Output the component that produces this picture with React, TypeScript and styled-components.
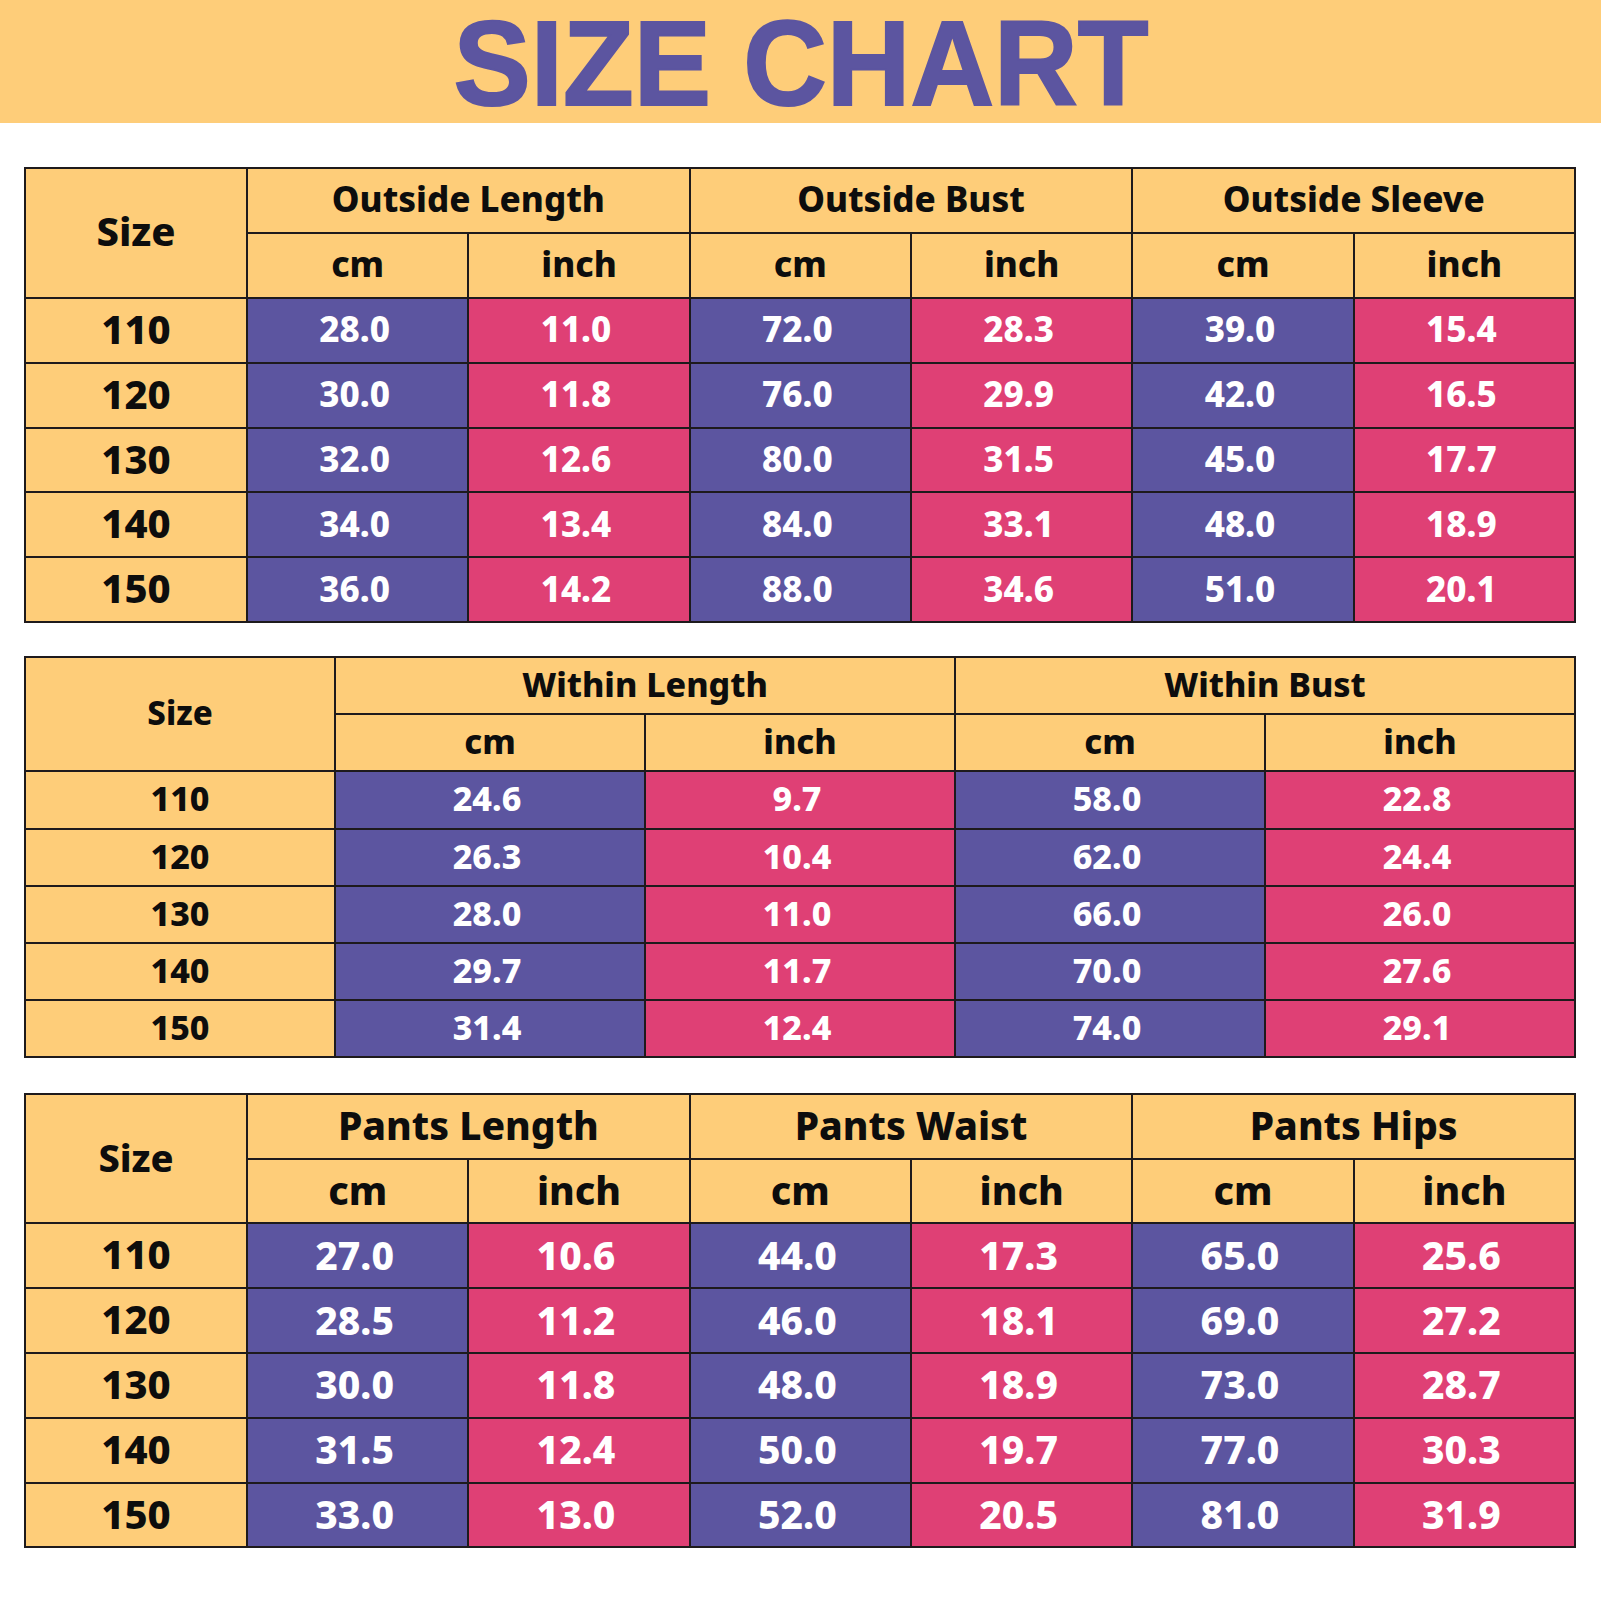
import React from "react";
import styled, { createGlobalStyle } from "styled-components";

const Global = createGlobalStyle`
  html, body { margin: 0; padding: 0; background: #ffffff; }
  body { font-family: "Noto Sans", "DejaVu Sans", sans-serif; }
`;

const YELLOW = "#fecd79";
const PURPLE = "#5c55a0";
const PINK = "#df4075";
const LINE = "#1e1a1c";

const Page = styled.div`
  width: 1601px;
  height: 1601px;
  display: flex;
  flex-direction: column;
`;

const Banner = styled.header`
  height: 123px;
  background: ${YELLOW};
  display: flex;
  align-items: center;
  justify-content: center;
`;

const Title = styled.h1`
  margin: 0;
  display: inline-block;
  font-family: "Liberation Sans", Arial, sans-serif;
  font-weight: 700;
  font-size: 120px;
  line-height: 120px;
  color: ${PURPLE};
  -webkit-text-stroke: 2px ${PURPLE};
  transform: scaleX(0.965);
  transform-origin: center;
  white-space: nowrap;
  padding-top: 2px;
`;

const Tables = styled.main`
  display: flex;
  flex-direction: column;
  padding: 44px 0 0 24px;
`;

const Table = styled.table<{ $gap: number }>`
  width: 1550px;
  border-collapse: collapse;
  table-layout: fixed;
  border: 2px solid ${LINE};
  margin-top: ${(p) => p.$gap}px;
`;

const Row = styled.tr<{ $h: number }>`
  height: ${(p) => p.$h}px;
`;

const HeadCell = styled.th<{ $size: number }>`
  background: ${YELLOW};
  color: #0d0d0d;
  border: 2px solid ${LINE};
  font-family: "Noto Sans", sans-serif;
  font-weight: 800;
  font-size: ${(p) => p.$size}px;
  line-height: 1;
  text-align: center;
  vertical-align: middle;
  padding: 0 0 3px 0;
`;

const ValueCell = styled.td<{ $kind: "cm" | "inch"; $size: number }>`
  background: ${(p) => (p.$kind === "cm" ? PURPLE : PINK)};
  color: #ffffff;
  border: 2px solid ${LINE};
  font-family: "Noto Sans", sans-serif;
  font-weight: 800;
  font-size: ${(p) => p.$size}px;
  line-height: 1;
  text-align: center;
  vertical-align: middle;
  padding: 0 6px 3px 0;
`;

type Spec = {
  groups: string[];
  rows: [string, string[]][];
  rowH: number;
  gap: number;
  sizeCol: number;
  headSize: number;
  unitSize: number;
  labelSize: number;
  sizeLabel: number;
  valueSize: number;
};

const specs: Spec[] = [
  {
    groups: ["Outside Length", "Outside Bust", "Outside Sleeve"],
    rows: [
      ["110", ["28.0", "11.0", "72.0", "28.3", "39.0", "15.4"]],
      ["120", ["30.0", "11.8", "76.0", "29.9", "42.0", "16.5"]],
      ["130", ["32.0", "12.6", "80.0", "31.5", "45.0", "17.7"]],
      ["140", ["34.0", "13.4", "84.0", "33.1", "48.0", "18.9"]],
      ["150", ["36.0", "14.2", "88.0", "34.6", "51.0", "20.1"]],
    ],
    rowH: 64.9,
    gap: 0,
    sizeCol: 222,
    headSize: 35,
    unitSize: 35,
    labelSize: 40,
    sizeLabel: 40,
    valueSize: 35,
  },
  {
    groups: ["Within Length", "Within Bust"],
    rows: [
      ["110", ["24.6", "9.7", "58.0", "22.8"]],
      ["120", ["26.3", "10.4", "62.0", "24.4"]],
      ["130", ["28.0", "11.0", "66.0", "26.0"]],
      ["140", ["29.7", "11.7", "70.0", "27.6"]],
      ["150", ["31.4", "12.4", "74.0", "29.1"]],
    ],
    rowH: 57.1,
    gap: 33,
    sizeCol: 310,
    headSize: 34,
    unitSize: 34,
    labelSize: 34,
    sizeLabel: 33,
    valueSize: 34,
  },
  {
    groups: ["Pants Length", "Pants Waist", "Pants Hips"],
    rows: [
      ["110", ["27.0", "10.6", "44.0", "17.3", "65.0", "25.6"]],
      ["120", ["28.5", "11.2", "46.0", "18.1", "69.0", "27.2"]],
      ["130", ["30.0", "11.8", "48.0", "18.9", "73.0", "28.7"]],
      ["140", ["31.5", "12.4", "50.0", "19.7", "77.0", "30.3"]],
      ["150", ["33.0", "13.0", "52.0", "20.5", "81.0", "31.9"]],
    ],
    rowH: 64.8,
    gap: 35,
    sizeCol: 222,
    headSize: 39,
    unitSize: 39,
    labelSize: 40,
    sizeLabel: 38,
    valueSize: 39,
  },
];

const ChartTable: React.FC<{ spec: Spec }> = ({ spec }) => {
  const dataCols = spec.groups.length * 2;
  const dataW = (1550 - spec.sizeCol) / dataCols;
  return (
    <Table $gap={spec.gap}>
      <colgroup>
        <col style={{ width: spec.sizeCol }} />
        {Array.from({ length: dataCols }).map((_, i) => (
          <col key={i} style={{ width: dataW }} />
        ))}
      </colgroup>
      <thead>
        <Row $h={spec.rowH}>
          <HeadCell $size={spec.sizeLabel} rowSpan={2}>
            Size
          </HeadCell>
          {spec.groups.map((g) => (
            <HeadCell key={g} $size={spec.headSize} colSpan={2}>
              {g}
            </HeadCell>
          ))}
        </Row>
        <Row $h={spec.rowH}>
          {spec.groups.map((g) => (
            <React.Fragment key={g}>
              <HeadCell $size={spec.unitSize}>cm</HeadCell>
              <HeadCell $size={spec.unitSize}>inch</HeadCell>
            </React.Fragment>
          ))}
        </Row>
      </thead>
      <tbody>
        {spec.rows.map(([label, vals]) => (
          <Row key={label} $h={spec.rowH}>
            <HeadCell as="td" $size={spec.labelSize}>
              {label}
            </HeadCell>
            {vals.map((v, i) => (
              <ValueCell key={i} $kind={i % 2 === 0 ? "cm" : "inch"} $size={spec.valueSize}>
                {v}
              </ValueCell>
            ))}
          </Row>
        ))}
      </tbody>
    </Table>
  );
};

export default function App() {
  return (
    <Page>
      <Global />
      <Banner>
        <Title>SIZE CHART</Title>
      </Banner>
      <Tables>
        {specs.map((s, i) => (
          <ChartTable key={i} spec={s} />
        ))}
      </Tables>
    </Page>
  );
}
